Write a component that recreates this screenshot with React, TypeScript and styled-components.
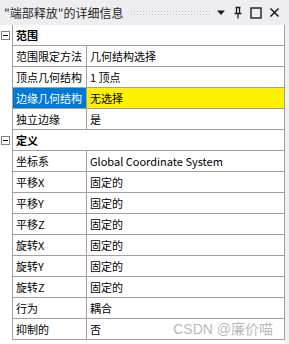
import styled, { createGlobalStyle } from "styled-components";

const GlobalStyle = createGlobalStyle`
  html, body {
    margin: 0;
    padding: 0;
    background: #fff;
  }
  body {
    font-family: "Noto Sans CJK SC", "Noto Sans", sans-serif;
    font-size: 11px;
    color: #000;
  }
`;

type Prop = { name: string; value: string; selected?: boolean };
type Group = { title: string; props: Prop[] };

const groups: Group[] = [
  {
    title: "范围",
    props: [
      { name: "范围限定方法", value: "几何结构选择" },
      { name: "顶点几何结构", value: "1 顶点" },
      { name: "边缘几何结构", value: "无选择", selected: true },
      { name: "独立边缘", value: "是" },
    ],
  },
  {
    title: "定义",
    props: [
      { name: "坐标系", value: "Global Coordinate System" },
      { name: "平移X", value: "固定的" },
      { name: "平移Y", value: "固定的" },
      { name: "平移Z", value: "固定的" },
      { name: "旋转X", value: "固定的" },
      { name: "旋转Y", value: "固定的" },
      { name: "旋转Z", value: "固定的" },
      { name: "行为", value: "耦合" },
      { name: "抑制的", value: "否" },
    ],
  },
];

export default function App() {
  return (
    <>
      <GlobalStyle />
      <Panel>
        <TitleBar>
          <Title>"端部释放"的详细信息</Title>
          <Grip />
          <TitleButtons>
            <svg width="10" height="6" viewBox="0 0 10 6">
              <path d="M1 0.5h8L5 5z" fill="#1e1e1e" />
            </svg>
            <svg width="10" height="13" viewBox="0 0 10 13">
              <path d="M2.5 1.5h5M3.5 1.5v6M6.5 1.5v6M1.5 7.5h7M5 7.5v5" stroke="#1e1e1e" strokeWidth="1.3" fill="none" />
            </svg>
            <svg width="12" height="12" viewBox="0 0 12 12">
              <rect x="1" y="1" width="10" height="10" stroke="#1e1e1e" strokeWidth="1.4" fill="none" />
            </svg>
            <svg width="11" height="11" viewBox="0 0 11 11">
              <path d="M1.5 1.5l8 8M9.5 1.5l-8 8" stroke="#1e1e1e" strokeWidth="1.6" fill="none" />
            </svg>
          </TitleButtons>
        </TitleBar>
        <Body>
          <Grid>
            {groups.map((g) => (
              <div key={g.title}>
                <Row>
                  <Gutter>
                    <Toggle />
                  </Gutter>
                  <CategoryCell>{g.title}</CategoryCell>
                </Row>
                {g.props.map((p) => (
                  <Row key={p.name}>
                    <Gutter />
                    <NameCell $selected={p.selected}>{p.name}</NameCell>
                    <ValueCell $selected={p.selected}>{p.value}</ValueCell>
                  </Row>
                ))}
              </div>
            ))}
          </Grid>
          <Strip />
        </Body>
        <Watermark>CSDN @廉价喵</Watermark>
      </Panel>
    </>
  );
}

const Panel = styled.div`
  position: relative;
  width: 289px;
  height: 344px;
  display: flex;
  flex-direction: column;
  overflow: hidden;
`;

const TitleBar = styled.div`
  height: 25px;
  flex: none;
  background: #eeeef2;
  display: flex;
  align-items: center;
  padding-left: 4px;
  box-sizing: border-box;
`;

const Title = styled.span`
  font-size: 12px;
  color: #1e1e1e;
  white-space: nowrap;
`;

const Grip = styled.div`
  flex: 1;
  height: 5px;
  margin: 0 6px 0 7px;
  background-image: radial-gradient(circle, #c2c2c6 0.7px, transparent 0.8px);
  background-size: 3px 3px;
  background-position: 0 0;
`;

const TitleButtons = styled.div`
  display: flex;
  align-items: center;
  gap: 7px;
  padding-right: 9px;
  svg {
    display: block;
  }
`;

const Body = styled.div`
  flex: 1;
  display: flex;
  align-items: flex-start;
`;

const Grid = styled.div`
  flex: 1;
  border-right: 1px solid #a0a0a0;
`;

const Strip = styled.div`
  width: 4px;
  align-self: stretch;
  background: #f0f0f0;
`;

const Row = styled.div`
  display: flex;
  height: 21px;
`;

const Gutter = styled.div`
  width: 13px;
  flex: none;
  border-right: 1px solid #a0a0a0;
  box-sizing: border-box;
  display: flex;
  align-items: center;
  justify-content: center;
`;

const Toggle = styled.div`
  width: 9px;
  height: 9px;
  box-sizing: border-box;
  border: 1px solid #808080;
  margin-right: 1px;
  position: relative;
  background: #fff;
  &::after {
    content: "";
    position: absolute;
    left: 1px;
    right: 1px;
    top: 3px;
    height: 1px;
    background: #000;
  }
`;

const Cell = styled.div`
  box-sizing: border-box;
  border-bottom: 1px solid #a0a0a0;
  display: flex;
  align-items: center;
  white-space: nowrap;
  overflow: hidden;
`;

const CategoryCell = styled(Cell)`
  flex: 1;
  padding-left: 3px;
  font-weight: bold;
`;

const NameCell = styled(Cell)<{ $selected?: boolean }>`
  width: 74px;
  flex: none;
  padding-left: 3px;
  border-right: 1px solid #a0a0a0;
  background: ${(p) => (p.$selected ? "#0078d7" : "#fff")};
  color: ${(p) => (p.$selected ? "#fff" : "#000")};
`;

const ValueCell = styled(Cell)<{ $selected?: boolean }>`
  flex: 1;
  padding-left: 3px;
  background: ${(p) => (p.$selected ? "#fff000" : "#fff")};
`;

const Watermark = styled.div`
  position: absolute;
  right: 16px;
  bottom: 6px;
  font-size: 14px;
  color: rgba(120, 120, 120, 0.55);
  font-family: "Liberation Sans", "Noto Sans CJK SC", sans-serif;
  white-space: nowrap;
`;
